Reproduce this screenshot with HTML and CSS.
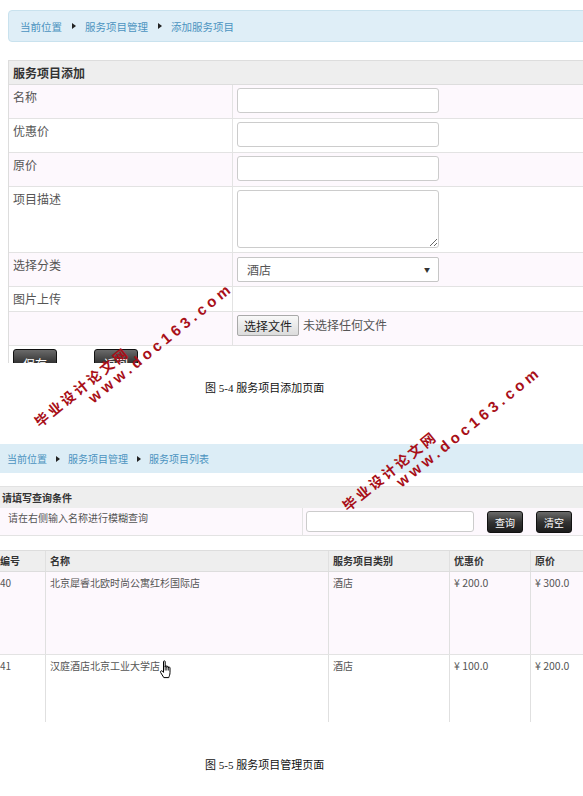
FILE: index.html
```html
<!DOCTYPE html>
<html lang="zh-CN">
<head>
<meta charset="utf-8">
<title>服务项目</title>
<link rel="stylesheet" href="styles.css">
</head>
<body>
<div class="page">
  <section class="shot shot-add">
    <div class="crumb crumb-lg">
      <span>当前位置</span><i class="tri"></i><span>服务项目管理</span><i class="tri"></i><span>添加服务项目</span>
    </div>
    <div class="form">
      <div class="fhead">服务项目添加</div>
      <div class="frow alt"><div class="lab">名称</div><div class="val"><input class="ipt" type="text"></div></div>
      <div class="frow"><div class="lab">优惠价</div><div class="val"><input class="ipt" type="text"></div></div>
      <div class="frow alt"><div class="lab">原价</div><div class="val"><input class="ipt" type="text"></div></div>
      <div class="frow row-desc"><div class="lab">项目描述</div><div class="val"><textarea class="ipt ta"></textarea></div></div>
      <div class="frow alt"><div class="lab">选择分类</div><div class="val val-sel"><div class="ipt sel"><span>酒店</span><span class="caret">▼</span></div></div></div>
      <div class="frow row-pic"><div class="lab">图片上传</div><div class="val"></div></div>
      <div class="frow alt"><div class="lab"></div><div class="val file"><button class="filebtn" type="button">选择文件</button><span>未选择任何文件</span></div></div>
      <div class="btnrow"><button class="dbtn btn-save" type="button">保存</button><button class="dbtn btn-back" type="button">返回</button></div>
    </div>
  </section>

  <p class="caption cap1">图 <span class="num">5-4</span> 服务项目添加页面</p>

  <section class="shot shot-list">
    <div class="crumb crumb-sm">
      <span>当前位置</span><i class="tri tri-sm"></i><span>服务项目管理</span><i class="tri tri-sm"></i><span>服务项目列表</span>
    </div>
    <div class="search">
      <div class="shead">请填写查询条件</div>
      <div class="srow">
        <div class="scell-l">请在右侧输入名称进行模糊查询</div>
        <div class="scell-r"><input class="sipt" type="text"><button class="dbtn sbtn" type="button">查询</button><button class="dbtn sbtn" type="button">清空</button></div>
      </div>
    </div>
    <div class="tbl">
      <div class="trow thead"><div class="c">编号</div><div class="c">名称</div><div class="c">服务项目类别</div><div class="c">优惠价</div><div class="c">原价</div></div>
      <div class="trow tr1"><div class="c">40</div><div class="c">北京犀睿北欧时尚公寓红杉国际店</div><div class="c">酒店</div><div class="c price">¥ 200.0</div><div class="c price">¥ 300.0</div></div>
      <div class="trow tr2"><div class="c">41</div><div class="c">汉庭酒店北京工业大学店<svg class="hand" width="14" height="19" viewBox="0 0 14 19"><path d="M4.5 1.6C4.5 0.6 6.2 0.6 6.2 1.6V7.2V6.4C6.2 5.5 7.8 5.5 7.8 6.4V7.6V7C7.8 6.1 9.4 6.1 9.4 7V8.2V7.8C9.4 6.9 11 6.9 11 7.8V12.6C11 14.8 10.2 15.8 9.8 17.6H4.8L1.6 12.4C1 11.3 2.4 10.2 3.4 11.1L4.5 12.4Z" fill="#fff" stroke="#000" stroke-width="1" stroke-linejoin="round"/><path d="M6.2 7.2V10.5M7.8 7.6V10.5M9.4 8.2V10.5" stroke="#000" stroke-width="0.8"/></svg></div><div class="c">酒店</div><div class="c price">¥ 100.0</div><div class="c price">¥ 200.0</div></div>
    </div>
  </section>

  <p class="caption cap2">图 <span class="num">5-5</span> 服务项目管理页面</p>

  <div class="wm wm1"><div class="wm-cn">毕业设计论文网</div><div class="wm-en">www.doc163.com</div></div>
  <div class="wm wm2"><div class="wm-cn">毕业设计论文网</div><div class="wm-en">www.doc163.com</div></div>
</div>
</body>
</html>
```

FILE: styles.css
```css
body {
  margin: 0;
  background: #fff;
  font-family: "Noto Sans CJK SC", "Noto Sans", sans-serif;
}

.page {
  position: relative;
  width: 583px;
  height: 796px;
  overflow: hidden;
}

/* ---------- shared ---------- */
.crumb {
  display: flex;
  align-items: center;
  color: #4b93c0;
  background: #dfeef7;
  white-space: nowrap;
}

.tri {
  display: block;
  width: 0;
  height: 0;
  border-left: 4px solid #222;
  border-top: 3.5px solid transparent;
  border-bottom: 3.5px solid transparent;
  margin: 0 9px 0 10px;
}

.tri-sm {
  margin: 0 8px 0 9px;
}

.dbtn {
  margin: 0;
  padding: 0;
  border: 1px solid #111;
  border-radius: 3px;
  background: linear-gradient(#6a6a6a, #333 50%, #1c1c1c);
  color: #fff;
  font-family: "Noto Sans CJK SC", sans-serif;
}

/* ---------- screenshot 1 ---------- */
.shot-add {
  height: 363px;
  box-sizing: border-box;
  padding: 10px 0 0 8px;
  overflow: hidden;
  font-size: 12px;
  color: #555;
}

.crumb-lg {
  height: 32px;
  box-sizing: border-box;
  border: 1px solid #c9e2ee;
  border-radius: 4px;
  margin-right: -10px;
  padding-left: 11px;
  font-size: 10.5px;
}

.form {
  margin-top: 18px;
  margin-right: -10px;
  border-top: 1px solid #dddddd;
  border-left: 1px solid #dddddd;
}

.fhead {
  height: 24px;
  box-sizing: border-box;
  background: #eeeeee;
  border-bottom: 1px solid #dddddd;
  padding-left: 4px;
  line-height: 23px;
  font-weight: bold;
  color: #333;
}

.frow {
  display: grid;
  grid-template-columns: 224px 1fr;
  height: 34px;
  box-sizing: border-box;
  border-bottom: 1px solid #e3e3e3;
}

.frow.alt {
  background: #fdf8fd;
}

.row-desc {
  height: 66px;
}

.row-pic {
  height: 25px;
}

.lab {
  border-right: 1px solid #e3e3e3;
  padding: 4px 0 0 4px;
  line-height: 16px;
}

.val {
  padding: 3px 0 0 4px;
}

.val-sel {
  padding-top: 4px;
}

.ipt {
  display: block;
  width: 202px;
  height: 25px;
  box-sizing: border-box;
  margin: 0;
  padding: 0 8px;
  border: 1px solid #cccccc;
  border-radius: 3px;
  background: #fff;
  font: 12px "Noto Sans CJK SC", sans-serif;
  color: #555;
}

.ta {
  height: 58px;
  padding: 4px 8px;
}

.sel {
  display: flex;
  align-items: center;
  justify-content: space-between;
  padding: 0 8px 0 9px;
  border-color: #c6c6c6;
  border-radius: 2px;
}

.caret {
  font-size: 6px;
  color: #333;
}

.file {
  display: flex;
  align-items: flex-start;
  gap: 4px;
  line-height: 20px;
}

.filebtn {
  width: 62px;
  height: 21px;
  margin: 0;
  padding: 0;
  border: 1px solid #a9a9a9;
  border-radius: 2px;
  background: linear-gradient(#f8f8f8, #dcdcdc);
  font: 12px "Noto Sans CJK SC", sans-serif;
  color: #222;
}

.btnrow {
  display: flex;
  padding: 3px 0 0 4px;
}

.btn-save,
.btn-back {
  width: 44px;
  height: 28px;
  font-size: 12px;
}

.btn-back {
  margin-left: 37px;
}

/* ---------- captions ---------- */
.caption {
  margin: 0;
  padding-left: 205px;
  font-family: "Liberation Serif", "Noto Sans CJK SC", serif;
  font-size: 11px;
  line-height: 14px;
  color: #111;
}

.cap1 {
  margin-top: 18px;
}

.cap2 {
  margin-top: 36px;
}

/* ---------- screenshot 2 ---------- */
.shot-list {
  margin-top: 49px;
  height: 278px;
  overflow: hidden;
  font-size: 10px;
  color: #555;
}

.crumb-sm {
  height: 29px;
  padding-left: 7px;
  font-size: 10px;
  background: #dcedf6;
}

.search {
  margin-top: 13px;
}

.shead {
  height: 22px;
  box-sizing: border-box;
  background: #eeeeee;
  border-top: 1px solid #e2e2e2;
  padding-left: 2px;
  line-height: 21px;
  font-weight: bold;
  color: #333;
}

.srow {
  display: grid;
  grid-template-columns: 302px 1fr;
  height: 28px;
  box-sizing: border-box;
  background: #fdf8fd;
  border-bottom: 1px solid #e3e3e3;
}

.scell-l {
  padding: 3px 0 0 8px;
  line-height: 14px;
}

.scell-r {
  display: flex;
  align-items: flex-start;
  border-left: 1px solid #e3e3e3;
  padding: 3px 0 0 3px;
}

.sipt {
  width: 168px;
  height: 21px;
  box-sizing: border-box;
  margin: 0;
  border: 1px solid #cccccc;
  border-radius: 3px;
  background: #fff;
}

.sbtn {
  width: 36px;
  height: 22px;
  margin-left: 13px;
  font-size: 10px;
}

.tbl {
  margin-top: 14px;
  margin-left: -5px;
  width: 610px;
}

.trow {
  display: grid;
  grid-template-columns: 50px 283px 121px 81px 75px;
  box-sizing: border-box;
}

.trow .c {
  padding: 4px 0 0 4px;
  line-height: 14px;
  white-space: nowrap;
}

.trow .c + .c {
  border-left: 1px solid #e0e0e0;
}

.trow .c:first-child {
  padding-left: 5px;
}

.trow .price {
  font-size: 10.5px;
}

.thead {
  height: 22px;
  border-top: 1px solid #dddddd;
  border-bottom: 1px solid #dddddd;
  background: #eeeeee;
  font-weight: bold;
  color: #333;
}

.thead .c {
  padding-top: 3px;
}

.tr1 {
  height: 83px;
  background: #fdf8fd;
  border-bottom: 1px solid #e3e3e3;
}

.tr2 {
  height: 90px;
  background: #fff;
}

.hand {
  display: inline-block;
  vertical-align: -9px;
  margin-left: -1px;
}

/* ---------- watermark overlay ---------- */
.wm {
  position: absolute;
  z-index: 5;
  transform-origin: 0 0;
  transform: rotate(-39deg);
  color: #a80f18;
  font-weight: 700;
  white-space: nowrap;
  line-height: 16px;
}

.wm1 {
  left: 31px;
  top: 417px;
}

.wm2 {
  left: 339px;
  top: 501px;
}

.wm-cn {
  font-family: "Noto Sans CJK SC", sans-serif;
  font-size: 14px;
  letter-spacing: 2.7px;
}

.wm-en {
  margin-left: 57px;
  font-family: "Liberation Sans", sans-serif;
  font-size: 15px;
  letter-spacing: 4px;
}
```
